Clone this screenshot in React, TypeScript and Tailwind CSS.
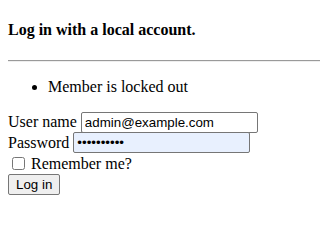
import React from "react";

export default function App() {
  return (
    <div className="bg-white text-black min-h-[205px] font-['Liberation_Serif',serif] text-[16px] leading-[normal] pl-2 pt-[21px]">
      <h4 className="font-bold text-[16px] leading-[normal] m-0">Log in with a local account.</h4>
      <hr className="mt-[21px] mb-0 border-0 border-t border-b border-t-[#9a9a9a] border-b-[#eeeeee] h-[2px]" />
      <ul className="list-disc pl-10 mt-4 mb-4">
        <li>Member is locked out</li>
      </ul>
      <form onSubmit={(e) => e.preventDefault()}>
        <div className="flex items-center h-[20px]">
          <label>User name</label>
          <input
            type="text"
            defaultValue="admin@example.com"
            className="ml-[4px] w-[177px] h-[21px] border border-[#767676] rounded-[2px] px-[3px] font-['Liberation_Sans',sans-serif] text-[13.33px] text-black bg-white outline-none"
          />
        </div>
        <div className="flex items-center h-[21px]">
          <label>Password</label>
          <input
            type="password"
            defaultValue="1234567890"
            className="ml-[4px] w-[177px] h-[21px] border border-[#767676] rounded-[2px] px-[3px] font-['Liberation_Sans',sans-serif] text-[13.33px] text-black bg-[#e8f0fe] outline-none"
          />
        </div>
        <div className="flex items-center h-[21px]">
          <input type="checkbox" className="w-[13px] h-[13px] mt-[3px] mr-[3px] mb-[3px] ml-[4px]" />
          <label className="ml-[3px]">Remember me?</label>
        </div>
        <button
          type="submit"
          className="h-[21px] px-[7px] border border-[#767676] rounded-[2px] bg-[#efefef] font-['Liberation_Sans',sans-serif] text-[13.33px] text-black leading-[normal]"
        >
          Log in
        </button>
      </form>
    </div>
  );
}
